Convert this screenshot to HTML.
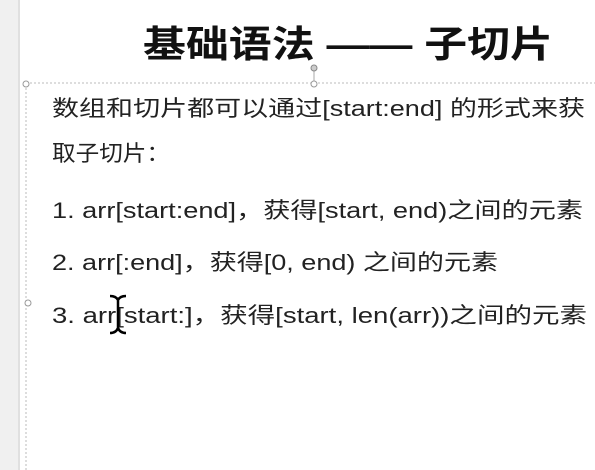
<html><body style="margin:0;width:595px;height:470px;overflow:hidden;background:#fff">
<svg width="595" height="470" xmlns="http://www.w3.org/2000/svg" style="display:block">
<rect x="0" y="0" width="20" height="470" fill="#f0f0f0"/>
<rect x="18" y="0" width="2" height="470" fill="#e0e0e0"/>
<line x1="26" y1="84" x2="26" y2="470" stroke="#bbb" stroke-dasharray="2,2"/>
<line x1="26" y1="83" x2="595" y2="83" stroke="#bbb" stroke-dasharray="2,2"/>
<line x1="314" y1="70" x2="314" y2="83" stroke="#aaa"/>
<circle cx="314" cy="68" r="3" fill="#ccc" stroke="#888"/>
<circle cx="314" cy="84" r="3" fill="#fff" stroke="#999"/>
<circle cx="26" cy="84" r="3" fill="#fff" stroke="#999"/>
<circle cx="28" cy="303" r="3" fill="#fff" stroke="#999"/>
<g font-family="Liberation Sans, Noto Sans CJK SC, sans-serif" fill="#111">
<text x="143" y="57" font-size="37" font-weight="bold" textLength="410" lengthAdjust="spacingAndGlyphs">基础语法 —— 子切片</text>
<g font-size="22" fill="#222">
<text x="52" y="116" textLength="533" lengthAdjust="spacingAndGlyphs">数组和切片都可以通过[start:end] 的形式来获</text>
<text x="52" y="161" textLength="118" lengthAdjust="spacingAndGlyphs">取子切片：</text>
<text x="52" y="218" textLength="531" lengthAdjust="spacingAndGlyphs">1. arr[start:end]，获得[start, end)之间的元素</text>
<text x="52" y="270" textLength="446" lengthAdjust="spacingAndGlyphs">2. arr[:end]，获得[0, end) 之间的元素</text>
<text x="52" y="323" textLength="535" lengthAdjust="spacingAndGlyphs">3. arr[start:]，获得[start, len(arr))之间的元素</text>
</g>
</g>
<path d="M110 296 q6 0 8 4 q2 -4 8 -4 M118 300 v28 M110 333 q6 0 8 -5 q2 5 8 5" stroke="#000" stroke-width="2.5" fill="none"/>
</svg>
</body></html>
